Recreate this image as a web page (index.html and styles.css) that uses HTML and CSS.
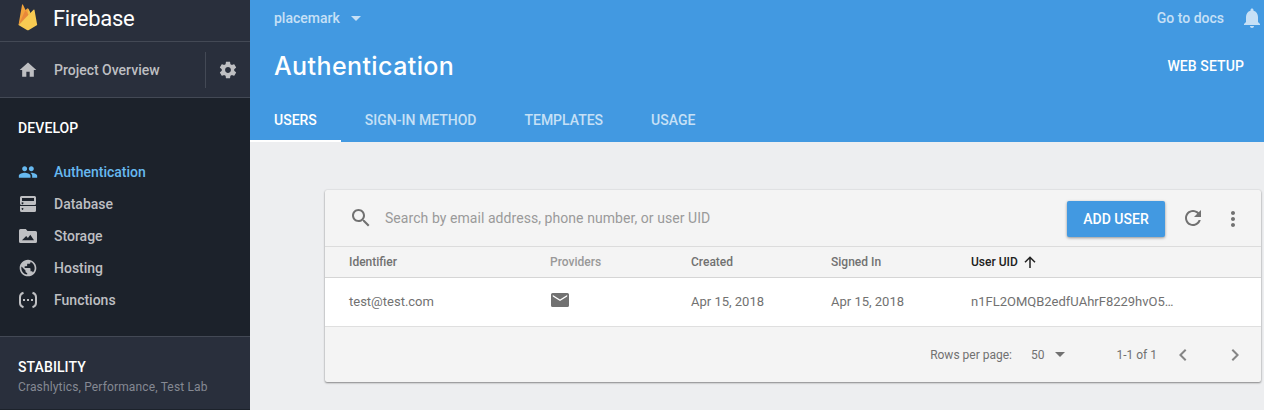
FILE: index.html
```html
<!DOCTYPE html>
<html lang="en">
<head>
<meta charset="utf-8">
<title>Firebase Authentication</title>
<link rel="stylesheet" href="styles.css">
</head>
<body>
<div class="app">
  <aside class="sidebar">
    <div class="brand">
      <svg class="brand-logo" width="20" height="27" viewBox="0 0 20 27">
        <path fill="#f2a43c" d="M.5 21 4 1q.3-1.200 1-.2L7.500 6 9.300 4.500q.4-.6.9 0L12 8.500z"/>
        <path fill="#e8883a" d="M.5 21 7.500 6l3.400 5.800z"/>
        <path fill="#f5c04a" d="M10 5.500q.3-.9.800 0l1.600 3.500-2.200 3.400z"/>
        <path fill="#f8cb52" d="M.5 21 15.500 5.800q.8-.6 1 .3L19.200 21l-8.300 5q-1 .6-2 0z"/>
      </svg>
      <span class="brand-name">Firebase</span>
    </div>
    <div class="project">
      <a class="project-link">
        <svg class="icon20" viewBox="0 0 24 24"><path d="M10 20v-6h4v6h5v-8h3L12 3 2 12h3v8z"/></svg>
        <span>Project Overview</span>
      </a>
      <div class="project-settings">
        <svg class="icon20" viewBox="0 0 24 24"><path d="M19.430 12.980c.04-.32.07-.64.07-.98s-.03-.66-.07-.98l2.110-1.650c.19-.15.24-.42.12-.64l-2-3.460c-.12-.22-.39-.3-.61-.22l-2.490 1c-.52-.4-1.080-.73-1.690-.98l-.38-2.650C14.460 2.180 14.250 2 14 2h-4c-.25 0-.46.18-.49.42l-.38 2.650c-.61.25-1.170.59-1.690.98l-2.490-1c-.23-.09-.49 0-.61.22l-2 3.460c-.13.22-.07.49.12.64l2.110 1.650c-.04.32-.07.65-.07.98s.03.66.07.98l-2.110 1.650c-.19.15-.24.42-.12.64l2 3.460c.12.22.39.3.61.22l2.490-1c.52.4 1.080.73 1.690.98l.38 2.650c.03.24.24.42.49.42h4c.25 0 .46-.18.49-.42l.38-2.650c.61-.25 1.170-.59 1.690-.98l2.490 1c.23.09.49 0 .61-.22l2-3.460c.12-.22.07-.49-.12-.64l-2.110-1.650zM12 15.500c-1.930 0-3.500-1.570-3.500-3.500s1.570-3.500 3.500-3.500 3.500 1.570 3.500 3.500-1.570 3.500-3.500 3.500z"/></svg>
      </div>
    </div>
    <nav class="nav">
      <h2 class="nav-title">DEVELOP</h2>
      <a class="nav-item active">
        <svg class="icon20" viewBox="0 0 24 24"><path d="M16 11c1.660 0 2.990-1.340 2.990-3S17.660 5 16 5s-3 1.340-3 3 1.340 3 3 3zm-8 0c1.660 0 2.990-1.340 2.990-3S9.660 5 8 5 5 6.340 5 8s1.340 3 3 3zm0 2c-2.330 0-7 1.170-7 3.500V19h14v-2.500c0-2.330-4.670-3.500-7-3.500zm8 0c-.29 0-.62.02-.97.05 1.160.84 1.970 1.970 1.970 3.450V19h6v-2.500c0-2.330-4.670-3.500-7-3.500z"/></svg>
        <span>Authentication</span>
      </a>
      <a class="nav-item">
        <svg class="icon20" viewBox="0 0 20 20"><path fill-rule="evenodd" d="M3.500 2h13A1.500 1.500 0 0 1 18 3.500V9.500a1.500 1.500 0 0 1-1.500 1.500h-13A1.500 1.500 0 0 1 2 9.500V3.500A1.500 1.500 0 0 1 3.500 2zm.5 2v3h12V4zM4.500 8.300a.9.9 0 1 0 .01 0zM2 12h16v4.500a1.500 1.500 0 0 1-1.500 1.500h-13A1.500 1.500 0 0 1 2 16.500zm2.500 2a.9.9 0 1 0 .01 0z"/></svg>
        <span>Database</span>
      </a>
      <a class="nav-item">
        <svg class="icon20" viewBox="0 0 20 20"><path fill-rule="evenodd" d="M2.500 3h5.300L9.500 5h8A1.500 1.500 0 0 1 19 6.500v9a1.500 1.500 0 0 1-1.500 1.500h-15A1.500 1.500 0 0 1 1 15.500v-11A1.500 1.500 0 0 1 2.500 3zM4 14.200h12l-3.700-5.400-2.400 3.100-1.700-1.900z"/></svg>
        <span>Storage</span>
      </a>
      <a class="nav-item">
        <svg class="icon20" viewBox="0 0 24 24"><path d="M12 2C6.480 2 2 6.480 2 12s4.480 10 10 10 10-4.480 10-10S17.520 2 12 2zm-1 17.930c-3.950-.49-7-3.850-7-7.930 0-.62.08-1.210.21-1.790L9 15v1c0 1.100.9 2 2 2v1.930zm6.900-2.540c-.26-.81-1-1.390-1.900-1.390h-1v-3c0-.55-.45-1-1-1H8v-2h2c.55 0 1-.45 1-1V7h2c1.100 0 2-.9 2-2v-.41c2.930 1.190 5 4.060 5 7.410 0 2.080-.8 3.970-2.100 5.390z"/></svg>
        <span>Hosting</span>
      </a>
      <a class="nav-item">
        <svg class="icon20" viewBox="0 0 20 20"><path fill="none" stroke="currentColor" stroke-width="2" d="M5.500 2.800Q2 4 2 7v6q0 3 3.500 4.200M14.500 2.800Q18 4 18 7v6q0 3-3.500 4.200"/><path d="M5 9h2v2H5zM9 9h2v2H9zM13 9h2v2h-2z"/></svg>
        <span>Functions</span>
      </a>
    </nav>
    <div class="stability">
      <h2 class="stability-title">STABILITY</h2>
      <p class="stability-text">Crashlytics, Performance, Test Lab</p>
    </div>
  </aside>
  <main class="main">
    <header class="header">
      <div class="topbar">
        <div class="project-name"><span>placemark</span><svg width="10" height="5" viewBox="0 0 10 5"><path d="M0 0h10L5 5z"/></svg></div>
        <div class="top-actions"><span>Go to docs</span><svg class="icon24" viewBox="0 0 24 24"><path d="M12 22c1.100 0 2-.9 2-2h-4c0 1.100.89 2 2 2zm6-6v-5c0-3.070-1.640-5.640-4.500-6.320V4c0-.83-.67-1.500-1.500-1.500s-1.500.67-1.500 1.500v.68C7.630 5.360 6 7.920 6 11v5l-2 2v1h16v-1l-2-2z"/></svg></div>
      </div>
      <div class="title-row">
        <h1 class="title">Authentication</h1>
        <span class="web-setup">WEB SETUP</span>
      </div>
      <div class="tabs">
        <a class="tab selected">USERS</a>
        <a class="tab">SIGN-IN METHOD</a>
        <a class="tab">TEMPLATES</a>
        <a class="tab">USAGE</a>
      </div>
    </header>
    <section class="content">
      <div class="card">
        <div class="toolbar">
          <svg class="icon24" viewBox="0 0 24 24"><path d="M15.500 14h-.79l-.28-.27C15.410 12.590 16 11.110 16 9.500 16 5.910 13.090 3 9.500 3S3 5.910 3 9.500 5.910 16 9.500 16c1.610 0 3.090-.59 4.230-1.570l.27.28v.79l5 4.990L20.490 19l-4.990-5zm-6 0C7.010 14 5 11.990 5 9.500S7.010 5 9.500 5 14 7.010 14 9.500 11.990 14 9.500 14z"/></svg>
          <span class="search-text">Search by email address, phone number, or user UID</span>
          <span class="add-user">ADD USER</span>
          <svg class="icon24" viewBox="0 0 24 24"><path d="M17.650 6.350C16.200 4.900 14.210 4 12 4c-4.420 0-7.990 3.580-7.990 8s3.570 8 7.990 8c3.730 0 6.840-2.550 7.730-6h-2.080c-.82 2.330-3.040 4-5.650 4-3.310 0-6-2.690-6-6s2.690-6 6-6c1.660 0 3.140.69 4.220 1.780L13 11h7V4l-2.350 2.350z"/></svg>
          <svg class="icon24 more" viewBox="0 0 24 24"><path d="M12 8c1.100 0 2-.9 2-2s-.9-2-2-2-2 .9-2 2 .9 2 2 2zm0 2c-1.100 0-2 .9-2 2s.9 2 2 2 2-.9 2-2-.9-2-2-2zm0 6c-1.100 0-2 .9-2 2s.9 2 2 2 2-.9 2-2-.9-2-2-2z"/></svg>
        </div>
        <div class="row row-head">
          <span>Identifier</span>
          <span class="muted">Providers</span>
          <span>Created</span>
          <span>Signed In</span>
          <span class="sorted"><span>User UID</span><svg width="12" height="12" viewBox="0 0 12 12"><path fill="none" stroke="currentColor" stroke-width="1.500" d="M6 12V1.500M1 6.200l5-5 5 5"/></svg></span>
        </div>
        <div class="row row-body">
          <span class="email">test@test.com</span>
          <span class="provider"><svg width="18" height="14" viewBox="0 0 18 14"><path fill-rule="evenodd" d="M1.600 0h14.800Q18 0 18 1.600v10.800q0 1.600-1.600 1.600H1.600Q0 14 0 12.400V1.600Q0 0 1.600 0zM1.800 1.900v1.700L9 8.100l7.200-4.500V1.900L9 6.400z"/></svg></span>
          <span>Apr 15, 2018</span>
          <span>Apr 15, 2018</span>
          <span class="uid">n1FL2OMQB2edfUAhrF8229hvO5…</span>
        </div>
        <div class="footer">
          <span class="rows-label">Rows per page:</span>
          <span class="rows-count">50</span>
          <svg class="caret" width="10" height="5" viewBox="0 0 10 5"><path d="M0 0h10L5 5z"/></svg>
          <span class="range">1-1 of 1</span>
          <svg class="chevron" width="8" height="12" viewBox="0 0 8 12"><path fill="none" stroke="currentColor" stroke-width="2" d="M6.700.7 1.400 6l5.300 5.300"/></svg>
          <svg class="chevron next" width="8" height="12" viewBox="0 0 8 12"><path fill="none" stroke="currentColor" stroke-width="2" d="M1.300.7 6.600 6l-5.300 5.300"/></svg>
        </div>
      </div>
    </section>
  </main>
</div>
</body>
</html>
```
FILE: styles.css
```css
* { box-sizing: border-box; }
body {
  margin: 0;
  font-family: Roboto, sans-serif;
  background: #edeef0;
  overflow: hidden;
}
h1, h2, p { margin: 0; font-weight: 500; }
svg { fill: currentColor; flex: none; display: block; }
span, a { white-space: nowrap; }
.icon20 { width: 20px; height: 20px; }
.icon24 { width: 24px; height: 24px; }
.app { display: flex; height: 410px; }

.sidebar {
  width: 250px;
  flex: none;
  display: flex;
  flex-direction: column;
  background: #292f3c;
  color: #bebfc2;
  font-size: 14px;
  font-weight: 500;
}
.brand {
  height: 42px;
  flex: none;
  display: flex;
  border-bottom: 1px solid #434955;
  padding: 4px 0 0 18px;
}
.brand-name {
  margin: 0 0 0 15px;
  font-size: 22px;
  line-height: 29px;
  font-weight: 400;
  letter-spacing: -.3px;
  color: #fff;
}
.project {
  height: 56px;
  flex: none;
  display: flex;
  align-items: center;
  border-bottom: 1px solid #434955;
}
.project-link {
  display: flex;
  align-items: center;
  gap: 16px;
  width: 205px;
  padding-left: 18px;
}
.project-settings {
  height: 36px;
  border-left: 1px solid #434955;
  display: flex;
  align-items: center;
  padding-left: 12px;
}
.nav {
  height: 238px;
  flex: none;
  background: #1c222b;
  padding: 20px 18px 0;
}
.nav-title { font-size: 14px; line-height: 20px; letter-spacing: .1px; color: #fff; margin-bottom: 18px; }
.nav-item { display: flex; align-items: center; gap: 16px; height: 32px; }
.nav-item.active { color: #67b9f0; }
.stability {
  flex: 1;
  border-top: 1px solid #434955;
  border-bottom: 1px solid #1c222b;
  padding: 20px 18px 0;
}
.stability-title { font-size: 14px; line-height: 20px; letter-spacing: .1px; color: #fff; }
.stability-text { font-size: 12px; line-height: 20px; font-weight: 400; letter-spacing: .15px; color: #858993; white-space: nowrap; }

.main { flex: 1; min-width: 0; }
.header {
  height: 142px;
  background: #4299e1;
  color: #fff;
  font-size: 14px;
  font-weight: 500;
  display: flex;
  flex-direction: column;
}
.topbar {
  height: 36px;
  display: flex;
  align-items: center;
  justify-content: space-between;
  padding-left: 24px;
  color: #c6e0f6;
}
.project-name { display: flex; align-items: center; gap: 11px; }
.top-actions { display: flex; align-items: center; gap: 16px; }
.title-row {
  height: 60px;
  display: flex;
  align-items: center;
  justify-content: space-between;
  padding: 0 20px 0 24px;
}
.web-setup { letter-spacing: .1px; }
.title { font-family: Inter, sans-serif; font-size: 25px; line-height: 32px; letter-spacing: .4px; }
.tabs { height: 46px; display: flex; }
.tab { padding: 14px 24px 0; line-height: 20px; color: #c6e0f6; }
.tab.selected { color: #fff; border-bottom: 2px solid #fff; }

.content { padding: 48px 3px 0 75px; }
.card {
  height: 192px;
  background: #f4f4f4;
  color: #717171;
  border-radius: 2px;
  box-shadow: 0 1px 2px rgba(0, 0, 0, .42), 0 0 2px rgba(0, 0, 0, .12);
}
.toolbar {
  height: 57px;
  display: flex;
  align-items: center;
  border-bottom: 1px solid #dcdcdc;
  padding: 0 16px 0 24px;
}
.search-text { flex: 1; padding-left: 12px; font-size: 14px; letter-spacing: .06px; color: #9a9a9a; }
.add-user {
  width: 98px;
  height: 36px;
  margin: 2px 16px 0 0;
  border-radius: 2px;
  background: #4299e1;
  color: #fff;
  font-size: 14px;
  line-height: 36px;
  font-weight: 500;
  text-align: center;
  box-shadow: 0 1px 3px rgba(0, 0, 0, .4);
}
.more { margin-left: 16px; margin-top: 2px; }
.row {
  display: grid;
  grid-template-columns: 201px 141px 140px 140px 1fr;
  align-items: center;
  padding-left: 24px;
}
.row-head { height: 31px; border-bottom: 1px solid #d5d5d5; font-size: 12px; font-weight: 500; }
.muted { color: #999; }
.sorted { display: flex; align-items: center; gap: 6px; color: #212121; }
.row-body { height: 49px; padding-bottom: 1px; background: #fff; border-bottom: 1px solid #dfdfdf; font-size: 13px; }
.provider { padding: 0 0 3px 1px; }
.footer {
  height: 55px;
  display: flex;
  align-items: center;
  justify-content: flex-end;
  font-size: 12px;
  padding: 0 22px 0 0;
}
.rows-count { margin-left: 19px; }
.caret { margin-left: 11px; }
.range { margin-left: 51px; }
.chevron { margin-left: 22px; color: #858585; }
.chevron.next { margin-left: 44px; }
```
